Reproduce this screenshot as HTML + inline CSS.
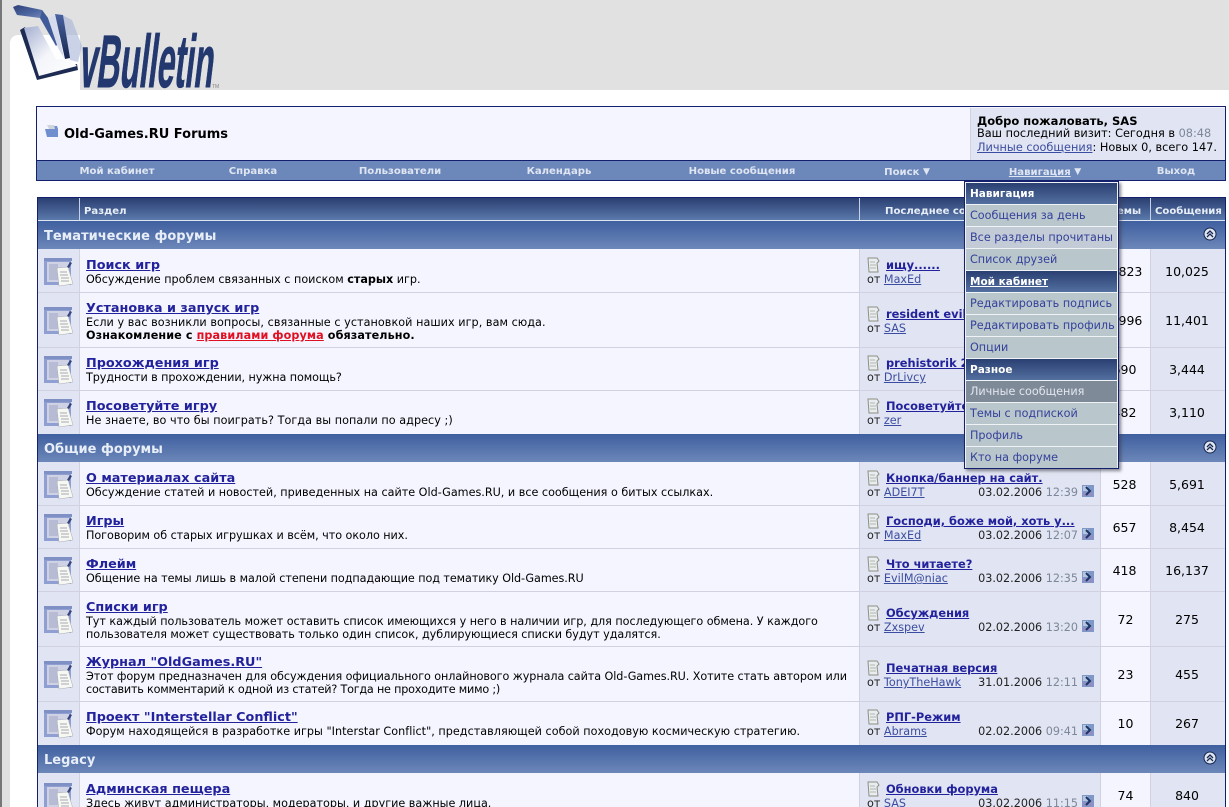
<!DOCTYPE html>
<html><head><meta charset="utf-8"><style>
html,body{margin:0;padding:0;width:1229px;height:807px;overflow:hidden;background:#fff}
body{position:relative;font-family:"DejaVu Sans","Liberation Sans",sans-serif;font-size:11px;color:#000}
div{position:absolute;box-sizing:border-box}
.t{white-space:nowrap;line-height:14px}
a{color:#22229c;text-decoration:underline}
.ti{font-size:12.8px;font-weight:bold;color:#22229c;text-decoration:underline;white-space:nowrap;position:absolute;left:86px;line-height:14px;margin-top:2px}
.d{position:absolute;left:86px;white-space:nowrap;line-height:13px;font-size:11.2px}
.c1,.c2,.c3,.c4,.c5{position:absolute}
.c1{left:38px;width:41px;background:#e1e4f2}
.c2{left:80px;width:779px;background:#f5f5ff}
.c3{left:860px;width:240px;background:#e1e4f2}
.c4{left:1101px;width:49px;background:#f5f5ff}
.c5{left:1151px;width:74px;background:#e1e4f2}
.n{position:absolute;text-align:center;line-height:16px;font-size:12.5px;white-space:nowrap;margin-top:1px}
.lt{position:absolute;left:886px;font-weight:bold;font-size:11.4px;color:#22229c;text-decoration:underline;white-space:nowrap;line-height:14px}
.lb{position:absolute;left:867px;white-space:nowrap;line-height:13px;font-size:11.2px;color:#222}
.dt{position:absolute;width:211px;left:867px;text-align:right;white-space:nowrap;line-height:13px;font-size:11.2px;color:#222}
.dt i{font-style:normal;color:#7c8798}
.cat{position:absolute;left:38px;width:1187px;height:28px;background:linear-gradient(#3f5f9f,#6c87b9);color:#e8eef8;font-weight:bold;font-size:13px;line-height:32px;padding-left:6px}
.nv{position:absolute;top:165px;font-weight:bold;font-size:10.1px;line-height:14px;color:#dfe6f2;white-space:nowrap;transform:translateX(-50%)}
.nv span{font-size:9px;vertical-align:1px}
.mh{position:absolute;left:966px;width:151px;height:21px;background:linear-gradient(#2a3f72,#53709f);color:#fff;font-weight:bold;font-size:10.5px;line-height:23px;padding-left:4px;white-space:nowrap}
.mi{position:absolute;left:966px;width:151px;height:21px;background:#b9c6cc;color:#35419a;font-size:11.2px;line-height:21px;padding-left:4px;white-space:nowrap}
.th{color:#e8eef8;font-weight:bold;font-size:10.1px;top:205px}
</style></head><body>
<div style="left:0;top:0;width:1229px;height:90px;background:#e1e1e2"></div>
<div style="left:10px;top:35px;width:70px;height:60px;background:#fff;border-top-left-radius:8px"></div>
<div style="left:0;top:0;width:10px;height:807px;background:#e1e1e2"></div>
<div style="left:0;top:0;width:2px;height:807px;background:#77777a"></div>
<svg style="position:absolute;left:0;top:0" width="240" height="100">
<defs>
<linearGradient id="g" x1="0" y1="0" x2="1" y2="1"><stop offset="0" stop-color="#2c3f78"/><stop offset=".55" stop-color="#4d66a0"/><stop offset="1" stop-color="#7a8cbc"/></linearGradient>
<linearGradient id="h" x1="0" y1="0" x2="0" y2="1"><stop offset="0" stop-color="#4a63a0"/><stop offset="1" stop-color="#16264f"/></linearGradient>
<linearGradient id="s" x1="0" y1="0" x2="1" y2="1"><stop offset="0" stop-color="#a3aed0"/><stop offset=".5" stop-color="#f4f5fa"/><stop offset="1" stop-color="#fff"/></linearGradient>
</defs>
<polygon points="62,15 72,20 82,46 78,62 70,60" fill="#a6b4d8" opacity=".6"/>
<polygon points="20,30 25,27 40,73 77,64 78,70 37,80" fill="#1d2a52"/>
<polygon points="24,28 38,26 56,59 70,60 77,66 39,76" fill="url(#s)"/>
<polygon points="13,7 18,5 42,10 48,18 40,18 17,15" fill="url(#g)"/>
<polygon points="42,10 48,18 58,44 56,46 40,18" fill="#3f5a98"/>
<polygon points="55,14 63,15 70,58 65,59" fill="url(#h)"/>
<polygon points="48,18 55,15 64,58 58,48" fill="#d6dced"/>
<text transform="translate(78,87) skewX(-7) scale(1,3.1)" font-family="Liberation Sans,sans-serif" font-weight="bold" font-size="24" textLength="134" lengthAdjust="spacingAndGlyphs" fill="#22386e" stroke="#22386e" stroke-width=".3">vBulletin</text>
<text x="212" y="88" font-family="Liberation Sans,sans-serif" font-size="5" fill="#888">TM</text>
</svg>

<!-- header box -->
<div style="left:36px;top:106px;width:1190px;height:75px;border:1px solid #14206e;background:#f5f5ff"></div>
<div style="left:970px;top:108px;width:255px;height:52px;background:#e1e4f2;border-left:1px solid #d1d1e1"></div>
<div style="left:37px;top:160px;width:1188px;height:20px;background:#6c87b9;border-top:1px solid #14206e"></div>
<svg style="position:absolute;left:44px;top:124px" width="16" height="15"><path d="M1 5h5l1-3h6l1 3v8H3z" fill="#6f8fcf"/><path d="M3 1l7 0 1 4H5z" fill="#cfd4df"/></svg>
<div class="t" style="left:64px;top:126px;margin-top:2px;font-size:13px;font-weight:bold">Old-Games.RU Forums</div>
<div class="t" style="left:977px;top:114px;font-weight:bold;font-size:11.5px">Добро пожаловать, SAS</div>
<div class="t" style="left:977px;top:127px;font-size:11.3px">Ваш последний визит: Сегодня в <span style="color:#7c8798">08:48</span></div>
<div class="t" style="left:977px;top:141px;font-size:11.3px"><a style="color:#3b4da0">Личные сообщения</a>: Новых 0, всего 147.</div>
<div class="nv" style="left:117px">Мой кабинет</div>
<div class="nv" style="left:253px">Справка</div>
<div class="nv" style="left:400px">Пользователи</div>
<div class="nv" style="left:559px">Календарь</div>
<div class="nv" style="left:742px">Новые сообщения</div>
<div class="nv" style="left:907px">Поиск <span>▼</span></div>
<div class="nv" style="left:1045px"><u>Навигация</u> <span>▼</span></div>
<div class="nv" style="left:1176px">Выход</div>

<!-- table -->
<div style="left:37px;top:197px;width:1189px;height:610px;background:#d1d1e1;border:1px solid #14206e;border-bottom:0"></div>
<div style="left:38px;top:198px;width:1187px;height:22px;background:linear-gradient(#2a3f72,#5b79ab)"></div>
<div style="left:79px;top:198px;width:1px;height:22px;background:#c7d2e4"></div>
<div style="left:859px;top:198px;width:1px;height:22px;background:#c7d2e4"></div>
<div style="left:1100px;top:198px;width:1px;height:22px;background:#c7d2e4"></div>
<div style="left:1150px;top:198px;width:1px;height:22px;background:#c7d2e4"></div>
<div style="left:38px;top:220px;width:1187px;height:1px;background:#dfe6f2"></div>
<div class="t th" style="left:84px">Раздел</div>
<div class="t th" style="left:885px">Последнее сообщение</div>
<div class="t th" style="left:1110px">Темы</div>
<div class="t th" style="left:1155px">Сообщения</div>

<div class="cat" style="top:221px">Тематические форумы</div>
<div class="cat" style="top:434px">Общие форумы</div>
<div class="cat" style="top:745px">Legacy</div>
<svg style="position:absolute;left:1203px;top:227px" width="14" height="14"><circle cx="7" cy="7" r="6" fill="#dfe6f2" stroke="#16264f"/><path d="M4 7l3-3 3 3M4 10l3-3 3 3" fill="none" stroke="#16264f" stroke-width="1.3"/></svg>
<svg style="position:absolute;left:1203px;top:440px" width="14" height="14"><circle cx="7" cy="7" r="6" fill="#dfe6f2" stroke="#16264f"/><path d="M4 7l3-3 3 3M4 10l3-3 3 3" fill="none" stroke="#16264f" stroke-width="1.3"/></svg>
<svg style="position:absolute;left:1203px;top:751px" width="14" height="14"><circle cx="7" cy="7" r="6" fill="#dfe6f2" stroke="#16264f"/><path d="M4 7l3-3 3 3M4 10l3-3 3 3" fill="none" stroke="#16264f" stroke-width="1.3"/></svg>

<!-- row backgrounds -->
<div class="c1" style="top:249px;height:43px"></div><div class="c2" style="top:249px;height:43px"></div><div class="c3" style="top:249px;height:43px"></div><div class="c4" style="top:249px;height:43px"></div><div class="c5" style="top:249px;height:43px"></div>
<div class="c1" style="top:293px;height:54px"></div><div class="c2" style="top:293px;height:54px"></div><div class="c3" style="top:293px;height:54px"></div><div class="c4" style="top:293px;height:54px"></div><div class="c5" style="top:293px;height:54px"></div>
<div class="c1" style="top:348px;height:42px"></div><div class="c2" style="top:348px;height:42px"></div><div class="c3" style="top:348px;height:42px"></div><div class="c4" style="top:348px;height:42px"></div><div class="c5" style="top:348px;height:42px"></div>
<div class="c1" style="top:391px;height:43px"></div><div class="c2" style="top:391px;height:43px"></div><div class="c3" style="top:391px;height:43px"></div><div class="c4" style="top:391px;height:43px"></div><div class="c5" style="top:391px;height:43px"></div>
<div class="c1" style="top:462px;height:43px"></div><div class="c2" style="top:462px;height:43px"></div><div class="c3" style="top:462px;height:43px"></div><div class="c4" style="top:462px;height:43px"></div><div class="c5" style="top:462px;height:43px"></div>
<div class="c1" style="top:506px;height:42px"></div><div class="c2" style="top:506px;height:42px"></div><div class="c3" style="top:506px;height:42px"></div><div class="c4" style="top:506px;height:42px"></div><div class="c5" style="top:506px;height:42px"></div>
<div class="c1" style="top:549px;height:42px"></div><div class="c2" style="top:549px;height:42px"></div><div class="c3" style="top:549px;height:42px"></div><div class="c4" style="top:549px;height:42px"></div><div class="c5" style="top:549px;height:42px"></div>
<div class="c1" style="top:592px;height:54px"></div><div class="c2" style="top:592px;height:54px"></div><div class="c3" style="top:592px;height:54px"></div><div class="c4" style="top:592px;height:54px"></div><div class="c5" style="top:592px;height:54px"></div>
<div class="c1" style="top:647px;height:54px"></div><div class="c2" style="top:647px;height:54px"></div><div class="c3" style="top:647px;height:54px"></div><div class="c4" style="top:647px;height:54px"></div><div class="c5" style="top:647px;height:54px"></div>
<div class="c1" style="top:702px;height:43px"></div><div class="c2" style="top:702px;height:43px"></div><div class="c3" style="top:702px;height:43px"></div><div class="c4" style="top:702px;height:43px"></div><div class="c5" style="top:702px;height:43px"></div>
<div class="c1" style="top:773px;height:34px"></div><div class="c2" style="top:773px;height:34px"></div><div class="c3" style="top:773px;height:34px"></div><div class="c4" style="top:773px;height:34px"></div><div class="c5" style="top:773px;height:34px"></div>

<!-- forum icons -->
<svg width="0" height="0" style="position:absolute"><defs>
<g id="fi"><rect x="0" y="1" width="27" height="27" fill="#8f9fd2"/><rect x="3" y="5" width="22" height="20" fill="#cfd2e4"/><path d="M0 1l28 0 0 3-28 0z" fill="#7f90c4"/><path d="M5 7h9v16H5z" fill="#b7bcd4"/><path d="M13 11l11-1 5 17-14 2z" fill="#f8f8f2" stroke="#a8adb8" stroke-width=".5"/><path d="M16 15h7M16 18h8M17 21h8M17 24h8" stroke="#a4a9b4"/><path d="M23 10l3-5 2 1-3 5z" fill="#34457f"/></g>
<g id="pi"><path d="M2 1h9l2 3-2 2 1 9H3z" fill="#e9ecf2" stroke="#8d917f"/><path d="M4 5h5M4 8h6M4 11h6" stroke="#b4b8a8"/></g>
<g id="ar"><rect width="12" height="12" fill="#7e98c8"/><rect x="1" y="7" width="10" height="4" fill="#8f8fc4"/><rect x="1" y="1" width="5" height="5" fill="#b4c6e0"/><path d="M4 2l4 4-4 4" fill="none" stroke="#1e3464" stroke-width="2"/></g>
</defs></svg>
<svg style="position:absolute;left:44px;top:257px" width="30" height="30"><use href="#fi"/></svg>
<svg style="position:absolute;left:44px;top:306px" width="30" height="30"><use href="#fi"/></svg>
<svg style="position:absolute;left:44px;top:355px" width="30" height="30"><use href="#fi"/></svg>
<svg style="position:absolute;left:44px;top:398px" width="30" height="30"><use href="#fi"/></svg>
<svg style="position:absolute;left:44px;top:470px" width="30" height="30"><use href="#fi"/></svg>
<svg style="position:absolute;left:44px;top:513px" width="30" height="30"><use href="#fi"/></svg>
<svg style="position:absolute;left:44px;top:556px" width="30" height="30"><use href="#fi"/></svg>
<svg style="position:absolute;left:44px;top:605px" width="30" height="30"><use href="#fi"/></svg>
<svg style="position:absolute;left:44px;top:660px" width="30" height="30"><use href="#fi"/></svg>
<svg style="position:absolute;left:44px;top:709px" width="30" height="30"><use href="#fi"/></svg>
<svg style="position:absolute;left:44px;top:782px" width="30" height="30"><use href="#fi"/></svg>

<!-- main cells -->
<div class="ti" style="top:257px">Поиск игр</div><div class="d" style="top:273px">Обсуждение проблем связанных с поиском <b>старых</b> игр.</div>
<div class="ti" style="top:300px">Установка и запуск игр</div><div class="d" style="top:316px;letter-spacing:.055px">Если у вас возникли вопросы, связанные с установкой наших игр, вам сюда.</div><div class="d" style="top:329px;letter-spacing:.1px"><b>Ознакомление с <span style="color:#e01020;text-decoration:underline">правилами форума</span> обязательно.</b></div>
<div class="ti" style="top:355px">Прохождения игр</div><div class="d" style="top:371px;letter-spacing:-.08px">Трудности в прохождении, нужна помощь?</div>
<div class="ti" style="top:398px">Посоветуйте игру</div><div class="d" style="top:414px;letter-spacing:.05px">Не знаете, во что бы поиграть? Тогда вы попали по адресу ;)</div>
<div class="ti" style="top:470px">О материалах сайта</div><div class="d" style="top:486px">Обсуждение статей и новостей, приведенных на сайте Old-Games.RU, и все сообщения о битых ссылках.</div>
<div class="ti" style="top:513px">Игры</div><div class="d" style="top:529px;letter-spacing:-.04px">Поговорим об старых игрушках и всём, что около них.</div>
<div class="ti" style="top:556px">Флейм</div><div class="d" style="top:572px;letter-spacing:-.065px">Общение на темы лишь в малой степени подпадающие под тематику Old-Games.RU</div>
<div class="ti" style="top:599px">Списки игр</div><div class="d" style="top:615px;letter-spacing:-.035px">Тут каждый пользователь может оставить список имеющихся у него в наличии игр, для последующего обмена. У каждого</div><div class="d" style="top:628px;letter-spacing:-.045px">пользователя может существовать только один список, дублирующиеся списки будут удалятся.</div>
<div class="ti" style="top:654px">Журнал "OldGames.RU"</div><div class="d" style="top:670px;letter-spacing:-.07px">Этот форум предназначен для обсуждения официального онлайнового журнала сайта Old-Games.RU. Хотите стать автором или</div><div class="d" style="top:683px;letter-spacing:-.2px">составить комментарий к одной из статей? Тогда не проходите мимо ;)</div>
<div class="ti" style="top:709px">Проект "Interstellar Conflict"</div><div class="d" style="top:725px;letter-spacing:.027px">Форум находящейся в разработке игры "Interstar Conflict", представляющей собой походовую космическую стратегию.</div>
<div class="ti" style="top:781px">Админская пещера</div><div class="d" style="top:797px">Здесь живут администраторы, модераторы, и другие важные лица.</div>

<!-- last post -->
<svg style="position:absolute;left:866px;top:257px" width="15" height="16"><use href="#pi"/></svg><div class="lt" style="top:258px">ищу......</div><div class="lb" style="top:273px">от <a style="color:#3b4da0">MaxEd</a></div>
<svg style="position:absolute;left:866px;top:306px" width="15" height="16"><use href="#pi"/></svg><div class="lt" style="top:307px">resident evil</div><div class="lb" style="top:322px">от <a style="color:#3b4da0">SAS</a></div>
<svg style="position:absolute;left:866px;top:355px" width="15" height="16"><use href="#pi"/></svg><div class="lt" style="top:356px">prehistorik 2</div><div class="lb" style="top:371px">от <a style="color:#3b4da0">DrLivcy</a></div>
<svg style="position:absolute;left:866px;top:398px" width="15" height="16"><use href="#pi"/></svg><div class="lt" style="top:399px">Посоветуйте</div><div class="lb" style="top:414px">от <a style="color:#3b4da0">zer</a></div>

<svg style="position:absolute;left:866px;top:470px" width="15" height="16"><use href="#pi"/></svg><div class="lt" style="top:471px">Кнопка/баннер на сайт.</div><div class="lb" style="top:486px">от <a style="color:#3b4da0">ADEI7T</a></div><div class="dt" style="top:486px">03.02.2006 <i>12:39</i></div><svg style="position:absolute;left:1082px;top:485px" width="12" height="12"><use href="#ar"/></svg>
<svg style="position:absolute;left:866px;top:513px" width="15" height="16"><use href="#pi"/></svg><div class="lt" style="top:514px">Господи, боже мой, хоть у...</div><div class="lb" style="top:529px">от <a style="color:#3b4da0">MaxEd</a></div><div class="dt" style="top:529px">03.02.2006 <i>12:07</i></div><svg style="position:absolute;left:1082px;top:528px" width="12" height="12"><use href="#ar"/></svg>
<svg style="position:absolute;left:866px;top:556px" width="15" height="16"><use href="#pi"/></svg><div class="lt" style="top:557px">Что читаете?</div><div class="lb" style="top:572px">от <a style="color:#3b4da0">EvilM@niac</a></div><div class="dt" style="top:572px">03.02.2006 <i>12:35</i></div><svg style="position:absolute;left:1082px;top:571px" width="12" height="12"><use href="#ar"/></svg>
<svg style="position:absolute;left:866px;top:605px" width="15" height="16"><use href="#pi"/></svg><div class="lt" style="top:606px">Обсуждения</div><div class="lb" style="top:621px">от <a style="color:#3b4da0">Zxspev</a></div><div class="dt" style="top:621px">02.02.2006 <i>13:20</i></div><svg style="position:absolute;left:1082px;top:620px" width="12" height="12"><use href="#ar"/></svg>
<svg style="position:absolute;left:866px;top:660px" width="15" height="16"><use href="#pi"/></svg><div class="lt" style="top:661px">Печатная версия</div><div class="lb" style="top:676px">от <a style="color:#3b4da0">TonyTheHawk</a></div><div class="dt" style="top:676px">31.01.2006 <i>12:11</i></div><svg style="position:absolute;left:1082px;top:675px" width="12" height="12"><use href="#ar"/></svg>
<svg style="position:absolute;left:866px;top:709px" width="15" height="16"><use href="#pi"/></svg><div class="lt" style="top:710px">РПГ-Режим</div><div class="lb" style="top:725px">от <a style="color:#3b4da0">Abrams</a></div><div class="dt" style="top:725px">02.02.2006 <i>09:41</i></div><svg style="position:absolute;left:1082px;top:724px" width="12" height="12"><use href="#ar"/></svg>
<svg style="position:absolute;left:866px;top:781px" width="15" height="16"><use href="#pi"/></svg><div class="lt" style="top:782px">Обновки форума</div><div class="lb" style="top:797px">от <a style="color:#3b4da0">SAS</a></div><div class="dt" style="top:797px">03.02.2006 <i>11:15</i></div><svg style="position:absolute;left:1082px;top:795px" width="12" height="12"><use href="#ar"/></svg>

<!-- counts -->
<div class="n" style="left:1100px;width:49px;top:263px">1,823</div><div class="n" style="left:1150px;width:74px;top:263px">10,025</div>
<div class="n" style="left:1100px;width:49px;top:312px">1,996</div><div class="n" style="left:1150px;width:74px;top:312px">11,401</div>
<div class="n" style="left:1100px;width:49px;top:361px">690</div><div class="n" style="left:1150px;width:74px;top:361px">3,444</div>
<div class="n" style="left:1100px;width:49px;top:404px">482</div><div class="n" style="left:1150px;width:74px;top:404px">3,110</div>
<div class="n" style="left:1100px;width:49px;top:476px">528</div><div class="n" style="left:1150px;width:74px;top:476px">5,691</div>
<div class="n" style="left:1100px;width:49px;top:519px">657</div><div class="n" style="left:1150px;width:74px;top:519px">8,454</div>
<div class="n" style="left:1100px;width:49px;top:562px">418</div><div class="n" style="left:1150px;width:74px;top:562px">16,137</div>
<div class="n" style="left:1101px;width:49px;top:611px">72</div><div class="n" style="left:1150px;width:74px;top:611px">275</div>
<div class="n" style="left:1101px;width:49px;top:666px">23</div><div class="n" style="left:1150px;width:74px;top:666px">455</div>
<div class="n" style="left:1101px;width:49px;top:715px">10</div><div class="n" style="left:1150px;width:74px;top:715px">267</div>
<div class="n" style="left:1101px;width:49px;top:787px">74</div><div class="n" style="left:1150px;width:74px;top:787px">840</div>

<!-- menu -->
<div style="left:964px;top:181px;width:155px;height:288px;background:#f0f3f6;border:1px solid #14206e;box-shadow:2px 2px 3px rgba(60,60,70,.6)"></div>
<div class="mh" style="top:183px">Навигация</div>
<div class="mi" style="top:205px">Сообщения за день</div>
<div class="mi" style="top:227px;background:#c3cbd6">Все разделы прочитаны</div>
<div class="mi" style="top:249px">Список друзей</div>
<div class="mh" style="top:271px"><u>Мой кабинет</u></div>
<div class="mi" style="top:293px">Редактировать подпись</div>
<div class="mi" style="top:315px">Редактировать профиль</div>
<div class="mi" style="top:337px">Опции</div>
<div class="mh" style="top:359px">Разное</div>
<div class="mi" style="top:381px;background:#7f8a99;color:#e2e6ee">Личные сообщения</div>
<div class="mi" style="top:403px">Темы с подпиской</div>
<div class="mi" style="top:425px">Профиль</div>
<div class="mi" style="top:447px">Кто на форуме</div>
</body></html>
